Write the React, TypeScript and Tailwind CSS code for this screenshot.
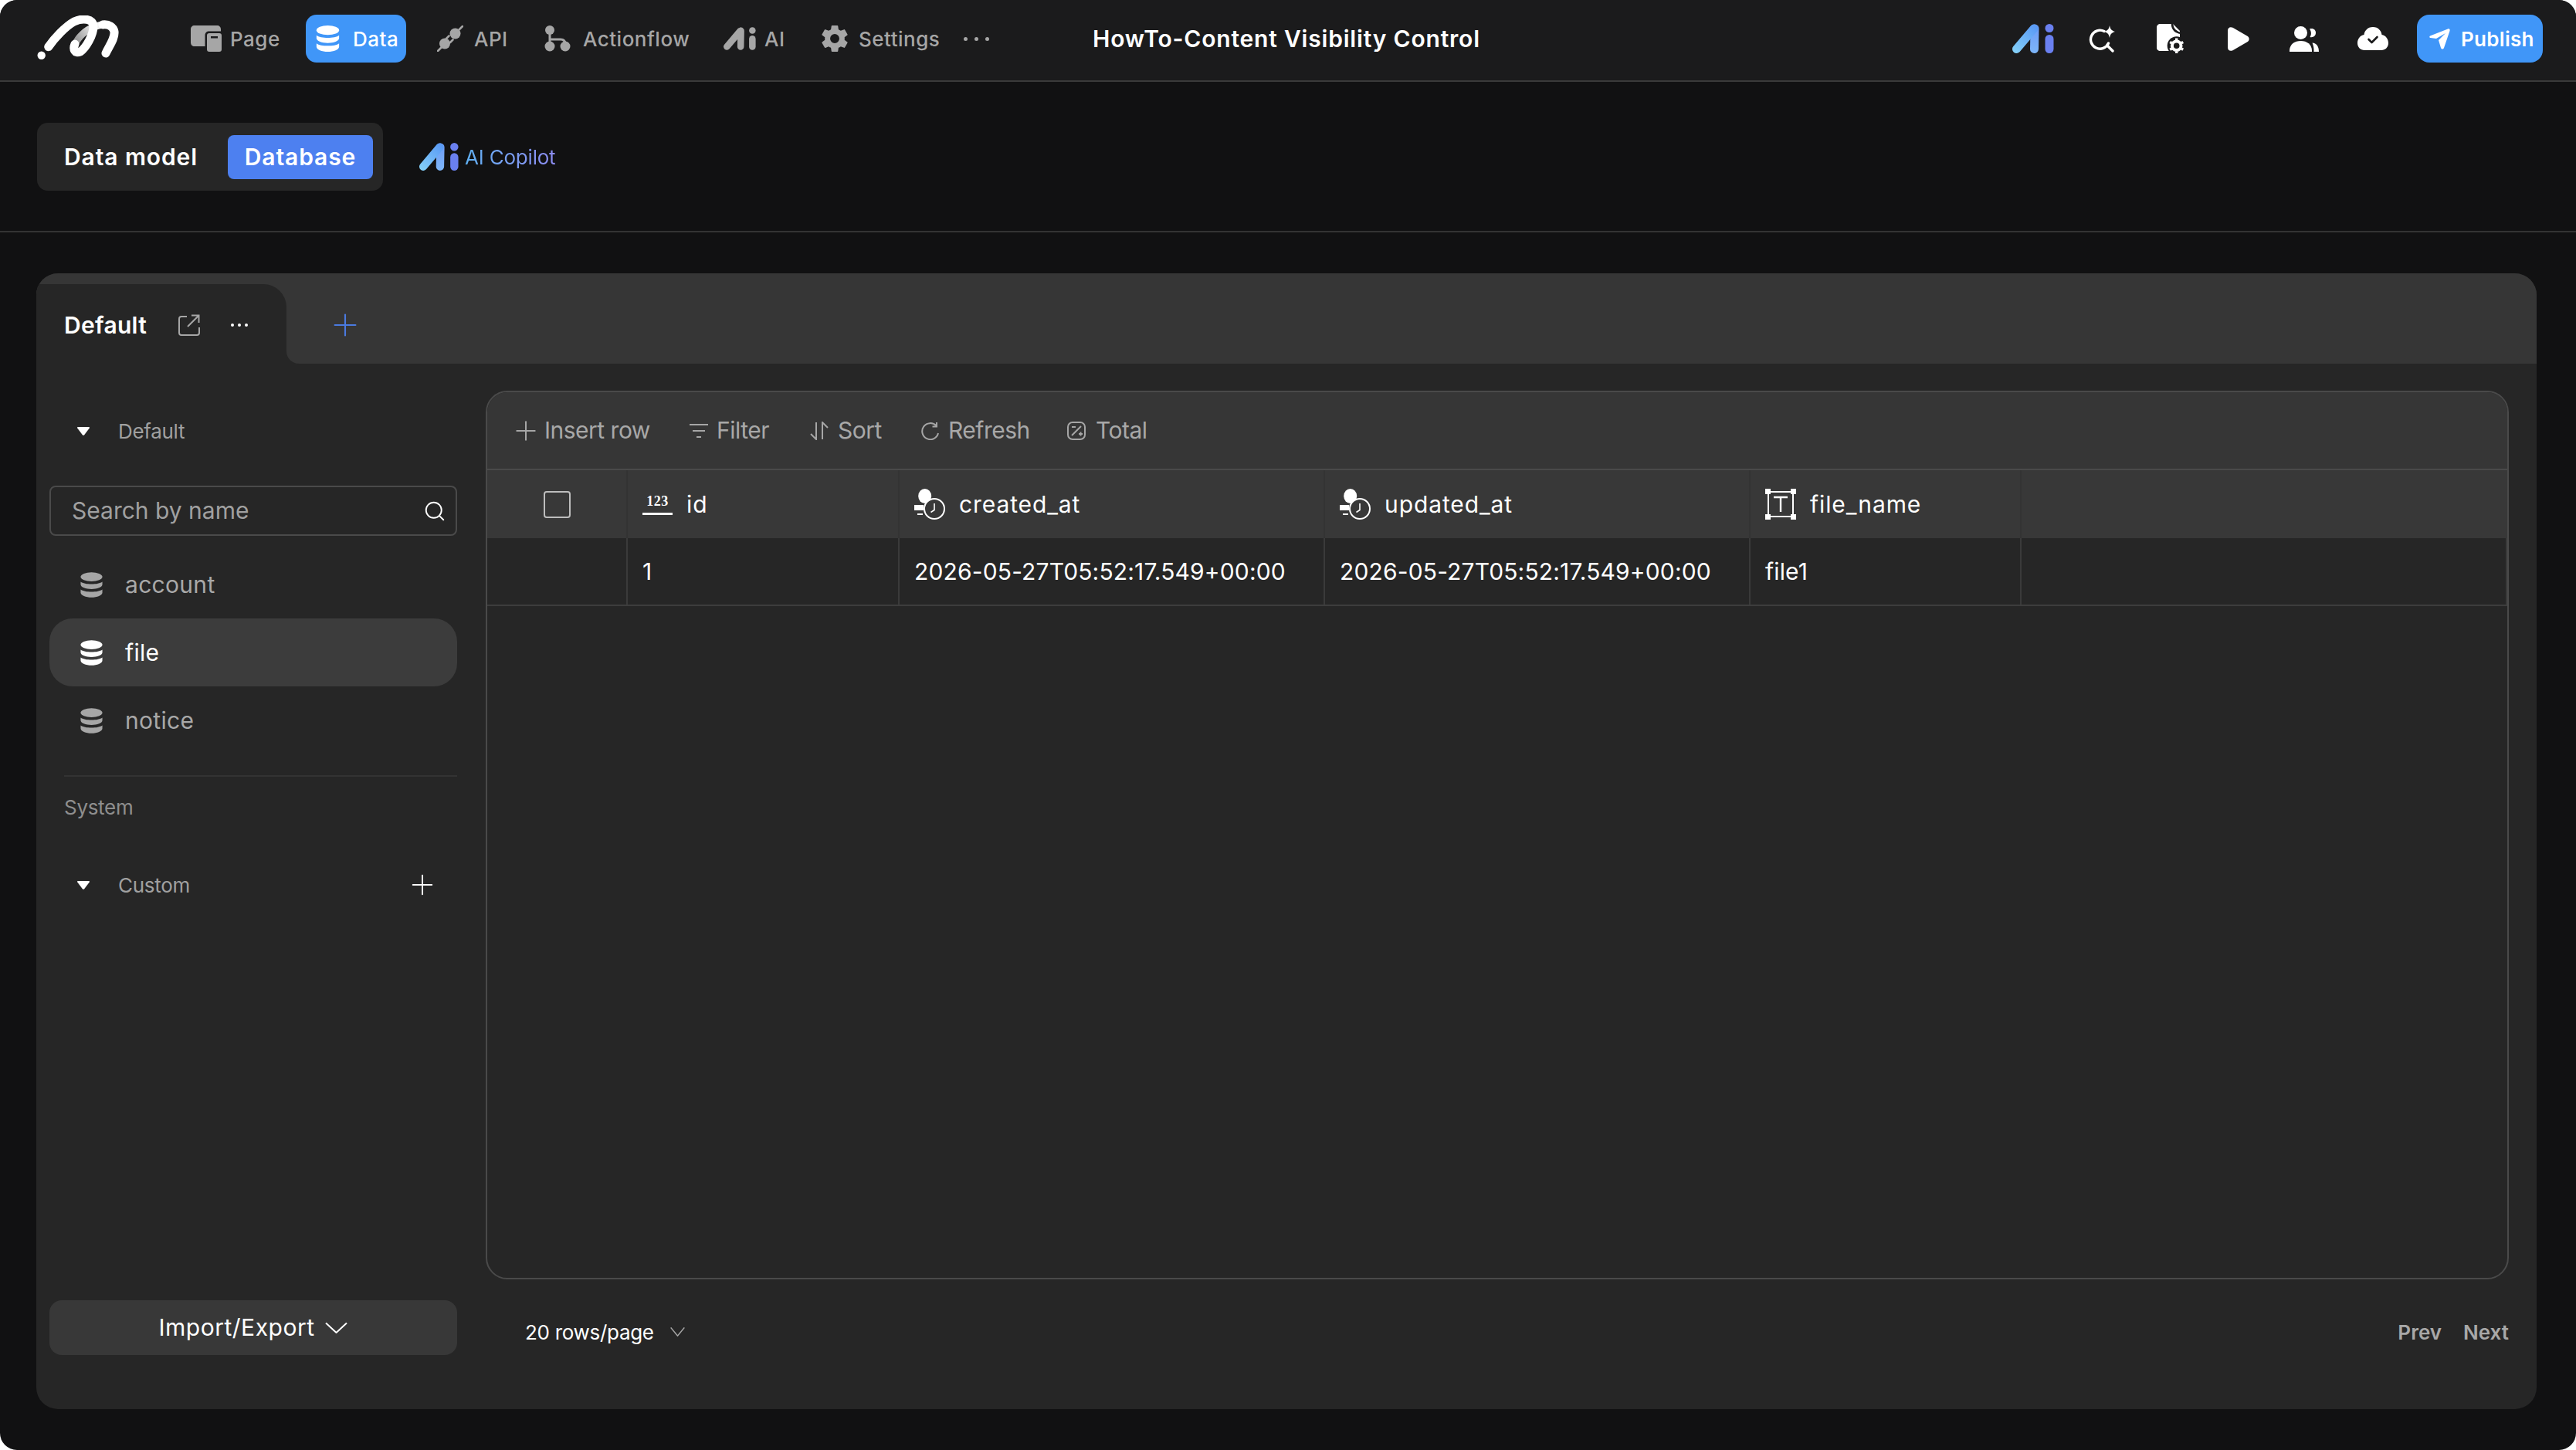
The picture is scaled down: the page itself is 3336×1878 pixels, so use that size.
import { Plus, Search } from 'lucide-react';
import { IoSettingsSharp } from 'react-icons/io5';

function Logo() {
  return (
    <svg width="106" height="60" viewBox="7 6 106 60" fill="none" strokeLinecap="round">
      <defs>
        <linearGradient id="logo-fade" x1="56" y1="44" x2="92" y2="18" gradientUnits="userSpaceOnUse">
          <stop offset="0" stopColor="#8a8a8a" />
          <stop offset="0.6" stopColor="#d8d8d8" />
          <stop offset="1" stopColor="#ffffff" />
        </linearGradient>
      </defs>
      <circle cx="12.700" cy="57.700" r="5.200" fill="white" />
      <path d="M56 44C60 34 70 25 80 21C88 18 92 18 96 18" stroke="url(#logo-fade)" strokeWidth="9" />
      <path d="M92 18C100 17 106 21 107 27C108 36 100 46 96 55" stroke="white" strokeWidth="11" />
      <path d="M21.700 46.700C30 35 44 20 55 14C66 9 80 10 80 20C80 32 70 48 63 53C56 56 53 50 56 43" stroke="white" strokeWidth="11" />
    </svg>
  );
}

function AiMark({ id, w, h }: { id: string; w: number; h: number }) {
  return (
    <svg width={w} height={h} viewBox="0 0 54 38" fill="none" strokeLinecap="round">
      <defs>
        <linearGradient id={`${id}-a`} x1="2" y1="36" x2="30" y2="4" gradientUnits="userSpaceOnUse">
          <stop offset="0" stopColor="#84d0f8" />
          <stop offset="1" stopColor="#5a9af5" />
        </linearGradient>
        <linearGradient id={`${id}-b`} x1="30" y1="6" x2="30" y2="36" gradientUnits="userSpaceOnUse">
          <stop offset="0" stopColor="#6f9ef6" />
          <stop offset="1" stopColor="#7cb4f8" />
        </linearGradient>
      </defs>
      <path d="M29 6L28.500 32.500" stroke={`url(#${id}-b)`} strokeWidth="11" />
      <path d="M5.500 32.500L28 6" stroke={`url(#${id}-a)`} strokeWidth="11" />
      <circle cx="48" cy="5.500" r="5.500" fill="#6a80f0" />
      <rect x="42.500" y="14" width="11" height="24" rx="5.500" fill="#6a80f0" />
    </svg>
  );
}

function AiGray() {
  return (
    <svg width="42" height="30" viewBox="0 0 54 38" fill="none" stroke="#a6a6a6" strokeLinecap="round" strokeWidth="11">
      <path d="M29 6L28.500 32.500M5.500 32.500L28 6" />
      <circle cx="48" cy="5.500" r="5.500" fill="#a6a6a6" stroke="none" />
      <rect x="42.500" y="14" width="11" height="24" rx="5.500" fill="#a6a6a6" stroke="none" />
    </svg>
  );
}

function DbIcon({ w, h, color }: { w: number; h: number; color: string }) {
  return (
    <svg width={w} height={h} viewBox="0 0 32 36" fill={color}>
      <ellipse cx="16" cy="6.500" rx="15.500" ry="6.500" />
      <path d="M.5 13.500C6 18 26 18 31.500 13.500V17.500C31.500 21.500 24 24 16 24S.5 21.500 .5 17.500Z" />
      <path d="M.5 24.500C6 29 26 29 31.500 24.500V29C31.500 33 24 36 16 36S.5 33 .5 29Z" />
    </svg>
  );
}

function PageIcon() {
  return (
    <svg width="40" height="34" viewBox="0 0 40 34" fill="#a6a6a6">
      <path d="M5 0H34C37 0 39 2 39 5V7.500H24C20.500 7.500 18.500 9.500 18.500 13V27H5C2 27 0 25 0 22V5C0 2 2 0 5 0Z" />
      <path fillRule="evenodd" d="M24 10H37C39 10 40 11 40 13V31C40 33 39 34 37 34H24C22 34 21 33 21 31V13C21 11 22 10 24 10ZM26 14V16.500H35V14Z" />
    </svg>
  );
}

function PlugIcon() {
  return (
    <svg width="34" height="34" viewBox="0 0 34 34" fill="#a6a6a6" stroke="#a6a6a6">
      <circle cx="23.500" cy="10.500" r="7" strokeWidth="0" />
      <circle cx="10" cy="23.500" r="7" strokeWidth="0" />
      <path d="M28 6L33 1M6 28L1 33M12 17L15.500 13.500M17 22L20.500 18.500" strokeWidth="2.600" strokeLinecap="round" />
    </svg>
  );
}

function FlowIcon() {
  return (
    <svg width="34" height="34" viewBox="0 0 34 34" fill="none">
      <circle cx="7" cy="6" r="6" fill="#a6a6a6" />
      <circle cx="7" cy="27" r="6.500" fill="#a6a6a6" />
      <circle cx="27" cy="27" r="6.500" fill="#a6a6a6" />
      <path d="M7 10V27M7 18H21C25 18 27 20 27 24" stroke="#a6a6a6" strokeWidth="3" />
    </svg>
  );
}

function SparkSearch() {
  return (
    <svg width="34" height="36" viewBox="0 0 34 36" fill="none">
      <path d="M20 8.500A12 12 0 1 0 25.500 24" stroke="white" strokeWidth="3.400" strokeLinecap="round" />
      <path d="M24 27L31 34" stroke="white" strokeWidth="3.400" strokeLinecap="round" />
      <path d="M27 1C27.800 5.500 29.500 7.700 34 9C29.500 10.300 27.800 12.500 27 17C26.200 12.500 24.500 10.300 20 9C24.500 7.700 26.200 5.500 27 1Z" fill="white" />
    </svg>
  );
}

function DocGear() {
  return (
    <svg width="36" height="38" viewBox="0 0 36 38" fill="none">
      <path d="M4 0H21L30 9V31C30 33 28 35 26 35H4C2 35 0 33 0 31V4C0 2 2 0 4 0Z" fill="white" />
      <path d="M20 -1C20 6 24 11 32 12" stroke="#1b1b1c" strokeWidth="2.600" />
      <circle cx="25.700" cy="28.300" r="12" fill="#1b1b1c" />
      <circle cx="25.700" cy="28.300" r="5.800" stroke="white" strokeWidth="4" />
      <path d="M25.700 18.500V21M25.700 35.500V38M17.200 23.400L19.500 24.700M31.900 31.900L34.200 33.200M17.200 33.200L19.500 31.900M31.900 24.700L34.200 23.400" stroke="white" strokeWidth="3.400" />
    </svg>
  );
}

function PlayIcon() {
  return (
    <svg width="28" height="31" viewBox="0 0 28 31" fill="white">
      <path d="M0 4.500C0 1 3 -1 6.500 .8L25 11.500C28.600 13.500 28.600 17.500 25 19.500L6.500 30.200C3 32 0 30 0 26.500Z" />
    </svg>
  );
}

function UsersIcon() {
  return (
    <svg width="38" height="33" viewBox="0 0 38 33" fill="white">
      <circle cx="14.500" cy="8.500" r="8.500" />
      <path d="M0 33C-.5 24 6 19 14.500 19S29.500 24 29 33Z" />
      <path d="M26 3.500C31 2 34 5 34 8.500C34 12 31 15 26.500 14C28.500 11 28.500 7 26 3.500Z" />
      <path d="M29.500 21.500C35 22 38 26 38 33H31.500C31.800 29 31 25 29.500 21.500Z" />
    </svg>
  );
}

function CloudIcon() {
  return (
    <svg width="40" height="30" viewBox="0 0 40 30" fill="none">
      <path d="M20 0C27 0 31 5 31.500 10C36.500 11 40 15 40 21C40 26 36 30 31 30H9C4 30 0 26 0 21C0 15 3.500 11 8.500 10C9 5 13 0 20 0Z" fill="white" />
      <path d="M14.500 16L18.500 20L25.500 13" stroke="#1b1b1c" strokeWidth="2.600" strokeLinecap="round" strokeLinejoin="round" />
    </svg>
  );
}

function SendIcon() {
  return (
    <svg width="27" height="27" viewBox="0 0 27 27" fill="white">
      <path d="M1 9.500L24 .5C26 -.2 27 1 26.500 3L19 25C18 27 16 27 15 25L12 15L21 6L9 13L1.500 12C0 11.800 0 10 1 9.500Z" />
    </svg>
  );
}

function ExternalIcon() {
  return (
    <svg width="28" height="28" viewBox="0 0 28 28" fill="none" stroke="#a6a6a6" strokeWidth="2">
      <path d="M11 3H4C2 3 1 4 1 6V24C1 26 2 27 4 27H24C26 27 27 26 27 24V17" />
      <path d="M12 16L26 2M17 1.500H26.500V11" />
    </svg>
  );
}

function Triangle() {
  return (
    <svg width="16" height="11" viewBox="0 0 16 11" fill="white">
      <path d="M1 0H15C16 0 16.300 1 15.800 1.600L9 10.400C8.500 11 7.500 11 7 10.400L.2 1.600C-.3 1 0 0 1 0Z" />
    </svg>
  );
}

function Chevron({ w, h, color }: { w: number; h: number; color: string }) {
  return (
    <svg width={w} height={h} viewBox="0 0 29 14" preserveAspectRatio="none" fill="none" stroke={color} strokeWidth="2">
      <path d="M1 0.500L14.500 13L28 0.500" />
    </svg>
  );
}

function FilterIcon() {
  return (
    <svg width="24" height="20" viewBox="0 0 24 20" fill="none" stroke="#a6a6a6" strokeWidth="2">
      <path d="M0 2H24M4 10H20M9 18H15" />
    </svg>
  );
}

function SortIcon() {
  return (
    <svg width="24" height="24" viewBox="0 0 24 24" fill="none" stroke="#a6a6a6" strokeWidth="2">
      <path d="M8 1V23L1 16M16 23V1L23 8" />
    </svg>
  );
}

function RefreshIcon() {
  return (
    <svg width="24" height="24" viewBox="0 0 24 24" fill="none" stroke="#a6a6a6" strokeWidth="2">
      <path d="M20.500 5.500A10.500 10.500 0 1 0 23 15" />
      <path d="M21 1V6.500H15.500" />
    </svg>
  );
}

function TotalIcon() {
  return (
    <svg width="24" height="24" viewBox="0 0 24 24" fill="none" stroke="#a6a6a6" strokeWidth="2">
      <rect x="1" y="1" width="22" height="22" rx="6" />
      <path d="M18 6L6 18M6 7H11M15 16H20M17.500 13.500V18.500" />
    </svg>
  );
}

function NumIcon() {
  return (
    <div className="flex w-[39px] flex-col items-center">
      <span className="font-['Liberation_Serif',serif] text-[18px] leading-[20px] font-bold tracking-[0.5px] text-white">123</span>
      <span className="mt-[5px] h-[3px] w-full bg-white" />
    </div>
  );
}

function TimeIcon() {
  return (
    <svg width="40" height="40" viewBox="0 0 40 40" fill="none">
      <ellipse cx="13.700" cy="9.500" rx="8.500" ry="9.500" fill="white" />
      <path d="M0 21H12V28H0ZM4 32H11V34H4Z" fill="white" />
      <circle cx="26" cy="26" r="13" fill="#383838" stroke="white" strokeWidth="2" />
      <path d="M26 19V27.500L21.500 30.500" stroke="white" strokeWidth="1.600" />
    </svg>
  );
}

function TextIcon() {
  return (
    <svg width="40" height="40" viewBox="0 0 40 40" fill="none" stroke="white">
      <rect x="4" y="4" width="32" height="32" strokeWidth="2" />
      <path d="M11 11H29M20 11V30" strokeWidth="2.400" />
      <path d="M0 0H7V7H0ZM33 0H40V7H33ZM0 33H7V40H0ZM33 33H40V40H33Z" fill="white" strokeWidth="0" />
    </svg>
  );
}

function Toolbar() {
  return (
    <div className="flex h-[99px] items-center bg-[#363636] pl-[30px] text-[30px] tracking-[-0.5px] text-[#a8a8a8]">
      <Plus className="size-[40px] text-[#a6a6a6]" strokeWidth={1.200} />
      <span className="ml-[4px] w-[188px]">Insert row</span>
      <FilterIcon />
      <span className="ml-[11px] w-[121px]">Filter</span>
      <SortIcon />
      <span className="ml-[12px] w-[107px]">Sort</span>
      <RefreshIcon />
      <span className="ml-[12px] w-[154px]">Refresh</span>
      <TotalIcon />
      <span className="ml-[13px]">Total</span>
    </div>
  );
}

function HeaderCell({ icon, label, divider = true }: { icon?: React.ReactNode; label?: string; divider?: boolean }) {
  return (
    <div className={`flex items-center gap-[18px] pl-[19px] ${divider ? 'border-r-2 border-[#333333]' : ''}`}>
      {icon}
      {label && <span>{label}</span>}
    </div>
  );
}

function DataTable() {
  const rowCell = 'flex items-center border-r-2 border-[#3a3a3a] pl-[19px]';
  return (
    <div className="flex h-[1151px] flex-col overflow-hidden rounded-[28px] border-2 border-[#4a4a4a] bg-[#262626]">
      <Toolbar />
      <div className="grid h-[90px] grid-cols-[182px_352px_551px_551px_351px_1fr] border-t-2 border-[#4a4a4a] bg-[#383838] text-[30px] tracking-[0.9px] text-white">
        <div className="flex items-center border-r-2 border-[#333333] pl-[73px]">
          <span className="size-[35px] rounded-[4px] border-2 border-[#bdbdbd]" />
        </div>
        <HeaderCell icon={<NumIcon />} label="id" />
        <HeaderCell icon={<TimeIcon />} label="created_at" />
        <HeaderCell icon={<TimeIcon />} label="updated_at" />
        <HeaderCell icon={<TextIcon />} label="file_name" />
        <HeaderCell divider={false} />
      </div>
      <div className="grid h-[88px] grid-cols-[182px_352px_551px_551px_351px_1fr] border-b-2 border-[#3d3d3d] text-[30px] tracking-[0.15px] text-white">
        <div className={rowCell} />
        <div className={rowCell}>1</div>
        <div className={rowCell}>2026-05-27T05:52:17.549+00:00</div>
        <div className={rowCell}>2026-05-27T05:52:17.549+00:00</div>
        <div className={rowCell}>file1</div>
        <div className="border-r-2 border-[#3a3a3a]" />
      </div>
    </div>
  );
}

function TableRow({ name, active }: { name: string; active?: boolean }) {
  return (
    <div className={`flex h-[88px] items-center gap-[29px] rounded-[30px] pl-[40px] text-[30px] tracking-[0.3px] ${active ? 'bg-[#3c3c3c] text-white' : 'text-[#a8a8a8]'}`}>
      <DbIcon w={29} h={35} color={active ? '#ffffff' : '#a6a6a6'} />
      <span>{name}</span>
    </div>
  );
}

function Sidebar() {
  return (
    <div className="ml-[17px] flex w-[528px] flex-col pb-[70px]">
      <div className="mt-[62px] flex h-[50px] items-center gap-[37px] pl-[36px] text-[26px] tracking-[-0.3px] text-[#a0a0a0]">
        <Triangle />
        <span>Default</span>
      </div>
      <div className="mt-[46px] flex h-[65px] items-center justify-between rounded-[8px] border-2 border-[#4a4a4a] pr-[12px] pl-[27px] text-[30px] tracking-[0px] text-[#a0a0a0]">
        <span>Search by name</span>
        <Search className="size-[30px] text-white" strokeWidth={1.500} />
      </div>
      <div className="mt-[19px] flex flex-col">
        <TableRow name="account" />
        <TableRow name="file" active />
        <TableRow name="notice" />
      </div>
      <div className="mt-[27px] ml-[19px] h-[2px] bg-[#333333]" />
      <div className="mt-[20px] ml-[19px] h-[40px] text-[26px] leading-[40px] tracking-[-0.3px] text-[#8e8e8e]">System</div>
      <div className="mt-[55px] flex h-[50px] items-center pr-[24px] pl-[36px] text-[26px] tracking-[-0.3px] text-[#a0a0a0]">
        <Triangle />
        <span className="ml-[37px]">Custom</span>
        <Plus className="ml-auto size-[42px] text-white" strokeWidth={1.100} />
      </div>
      <div className="mt-auto flex h-[71px] items-center justify-center gap-[14px] rounded-[16px] bg-[#383838] text-[30px] tracking-[0.5px] text-white">
        <span>Import/Export</span>
        <Chevron w={29} h={14} color="#ffffff" />
      </div>
    </div>
  );
}

export default function App() {
  return (
    <div className="h-[1878px] w-[3336px] overflow-hidden bg-white font-['Inter',sans-serif]">
      <div className="flex h-full flex-col overflow-hidden rounded-[22px] bg-[#111112]">
        {/* top bar */}
        <header className="flex h-[106px] shrink-0 items-center border-b-2 border-[#3a3a3a] bg-[#1b1b1c] pb-[4px] pl-[48px] text-[26px] font-medium tracking-[0.5px] text-[#a6a6a6]">
          <div className="w-[199px]"><Logo /></div>
          <div className="flex w-[149px] items-center gap-[11px]"><PageIcon /><span>Page</span></div>
          <div className="flex h-[62px] w-[130px] items-center gap-[16px] rounded-[14px] bg-[#4096f8] pl-[12px] text-white">
            <DbIcon w={33} h={34} color="#ffffff" />
            <span>Data</span>
          </div>
          <div className="ml-[40px] flex w-[139px] items-center gap-[14px]"><PlugIcon /><span>API</span></div>
          <div className="flex w-[232px] items-center gap-[16px]"><FlowIcon /><span>Actionflow</span></div>
          <div className="flex w-[125px] items-center gap-[11px]"><AiGray /><span>AI</span></div>
          <div className="flex w-[186px] items-center gap-[12px]"><IoSettingsSharp className="size-[38px]" /><span>Settings</span></div>
          <div className="flex w-[167px] items-center gap-[9px]">
            <span className="size-[5px] rounded-full bg-[#a6a6a6]" />
            <span className="size-[5px] rounded-full bg-[#a6a6a6]" />
            <span className="size-[5px] rounded-full bg-[#a6a6a6]" />
          </div>
          <div className="text-[30px] font-semibold tracking-[0.8px] text-white">HowTo-Content Visibility Control</div>
          <div className="ml-auto flex items-center pr-[43px]">
            <AiMark id="ai-top" w={54} h={38} />
            <div className="ml-[45px] w-[88px]"><SparkSearch /></div>
            <div className="w-[92px]"><DocGear /></div>
            <div className="w-[80px]"><PlayIcon /></div>
            <div className="w-[88px]"><UsersIcon /></div>
            <div className="w-[77px]"><CloudIcon /></div>
            <div className="flex h-[62px] w-[163px] items-center gap-[14px] rounded-[16px] bg-[#4096f8] pl-[16px] text-white">
              <SendIcon />
              <span className="font-semibold tracking-[0.3px]">Publish</span>
            </div>
          </div>
        </header>

        {/* sub bar */}
        <div className="flex h-[195px] shrink-0 items-start border-b-2 border-[#333333] pt-[53px] pl-[48px]">
          <div className="flex h-[88px] w-[448px] items-center rounded-[14px] bg-[#262626] pl-[35px] text-[30px] font-semibold tracking-[0.9px] text-white">
            <span className="w-[212px]">Data model</span>
            <span className="flex h-[57px] w-[188px] items-center justify-center rounded-[8px] bg-[#4d80f0]">Database</span>
          </div>
          <div className="mt-[26px] ml-[47px] flex h-[36px] items-center gap-[8px]">
            <AiMark id="ai-copilot" w={51} h={36} />
            <span className="bg-gradient-to-r from-[#5fb0f2] to-[#8c8cf2] bg-clip-text text-[26px] tracking-[-0.2px] text-transparent">AI Copilot</span>
          </div>
        </div>

        {/* database panel */}
        <div className="mt-[53px] ml-[47px] flex h-[1471px] w-[3238px] flex-col overflow-hidden rounded-[28px] bg-[#262626]">
          <div className="h-[14px] shrink-0 bg-[#363636]" />
          <div className="flex h-[103px] shrink-0">
            <div className="w-[324px] bg-[#363636]">
              <div className="flex h-full items-center rounded-tr-[30px] bg-[#262626] pt-[3px] pl-[36px]">
                <span className="w-[148px] text-[30px] font-semibold tracking-[0.3px] text-white">Default</span>
                <ExternalIcon />
                <div className="ml-[40px] flex gap-[5px]">
                  <span className="size-[4px] rounded-full bg-white" />
                  <span className="size-[4px] rounded-full bg-white" />
                  <span className="size-[4px] rounded-full bg-white" />
                </div>
              </div>
            </div>
            <div className="flex flex-1 items-center rounded-bl-[16px] bg-[#363636] pt-[3px] pl-[53px]">
              <Plus className="size-[46px] text-[#4a7ae0]" strokeWidth={1.100} />
            </div>
          </div>
          <div className="flex flex-1">
            <Sidebar />
            <div className="ml-[37px] flex w-[2620px] flex-col pt-[35px]">
              <DataTable />
              <div className="mt-[48px] flex h-[40px] items-center justify-between pl-[51px] text-[26px]">
                <div className="flex items-center gap-[21px] tracking-[-0.3px] text-white">
                  <span>20 rows/page</span>
                  <Chevron w={19} h={12} color="#a6a6a6" />
                </div>
                <div className="flex gap-[28px] font-semibold text-[#a8a8a8]">
                  <span>Prev</span>
                  <span>Next</span>
                </div>
              </div>
            </div>
          </div>
        </div>
      </div>
    </div>
  );
}
